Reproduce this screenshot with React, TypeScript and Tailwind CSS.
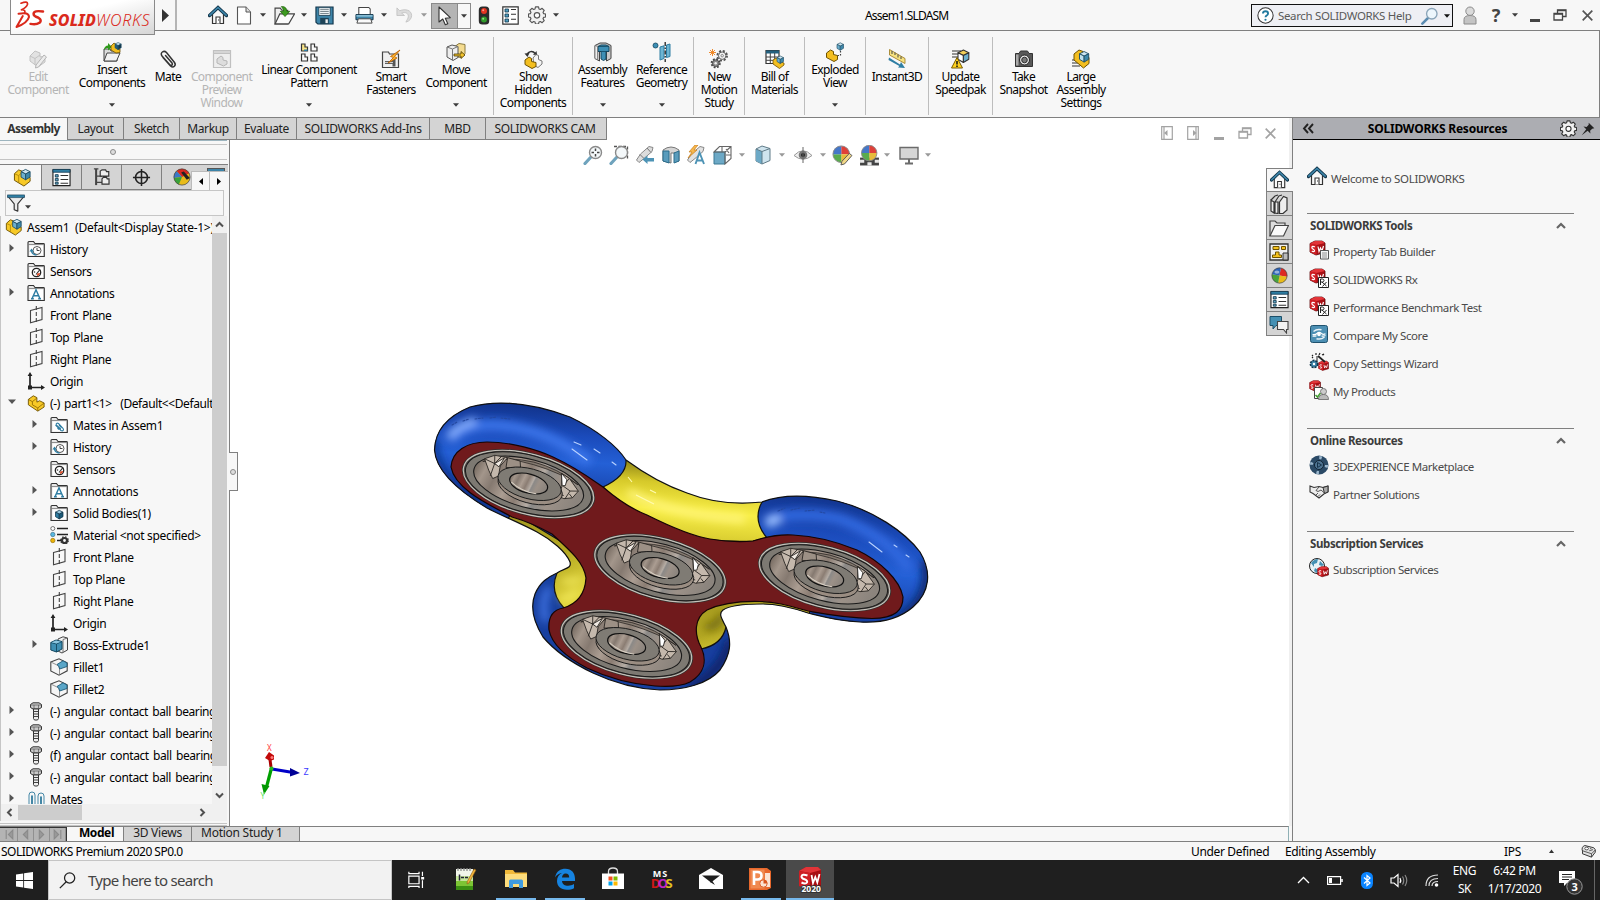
import React from "react";
import type { ReactNode } from "react";

type IconProps = { w?: number; h?: number; vb?: string; className?: string; children?: ReactNode };

function Svg({ w = 20, h = w, vb = "0 0 20 20", className = "", children }: IconProps) {
  return (
    <svg width={w} height={h} viewBox={vb} fill="none" className={`shrink-0 ${className}`}>
      {children}
    </svg>
  );
}

/* ---------- shared glyphs ---------- */

const Caret = ({ c = "#3c3c3c" }: { c?: string }) => (
  <Svg w={6} h={4} vb="0 0 6 4"><path d="M0 .3h6L3 3.7z" fill={c} /></Svg>
);

const Cube = ({ x = 0, y = 0, s = 1, top = "#cfe6f1", left = "#6cb0cf", right = "#3d88ab", line = "#1f4f66" }) => (
  <g transform={`translate(${x} ${y}) scale(${s})`} stroke={line} strokeWidth="1" strokeLinejoin="round">
    <path d="M0 2.500 5 0l5 2.500-5 2.500z" fill={top} />
    <path d="M0 2.500v6L5 11.500V5z" fill={left} />
    <path d="M10 2.500v6L5 11.500V5z" fill={right} />
  </g>
);

const AssemblyIcon = ({ w = 20 }: { w?: number }) => (
  <Svg w={w}>
    <path d="M1.500 6 6 2l4 1.500V9l3-1 5 2v4l-6.500 5L1.500 13z" fill="#f7c927" stroke="#6e5200" strokeLinejoin="round" />
    <path d="M1.500 6 6 8v7.500M6 8l4-4" stroke="#a57c00" strokeWidth=".8" />
    <Cube x={8.500} y={1.500} s={0.95} />
  </Svg>
);

const PartIcon = () => (
  <Svg w={18}>
    <path d="M1.500 6 7 2l4 2v5l3-1.500 5 2.500v4.500L12 19 1.500 12z" fill="#f7c927" stroke="#6e5200" strokeLinejoin="round" />
    <path d="M1.500 6 6 8.500l5-4M6 8.500V12l6 3.500 7-5.500M12 15.500V19" stroke="#8a6500" strokeWidth=".9" />
  </Svg>
);

const HomeIcon = ({ w = 20 }: { w?: number }) => (
  <Svg w={w}>
    <path d="M4.500 9.500V18.500h11V9.500" fill="#fafafa" stroke="#333" strokeWidth="1.200" />
    <path d="M8 18.500V12h4v6.500" fill="#fff" stroke="#333" strokeWidth="1.100" />
    <path d="M10.500 14.500v1" stroke="#333" />
    <path d="M1.500 10.500 10 2.500l8.500 8" stroke="#12354a" strokeWidth="3.400" strokeLinecap="round" />
    <path d="M1.800 10.200 10 2.500l8.200 7.700" stroke="#3d86ab" strokeWidth="1.600" strokeLinecap="round" />
  </Svg>
);

const FolderShell = ({ children }: { children?: ReactNode }) => (
  <Svg w={18} vb="0 0 18 18">
    <path d="M1 16.500V2.500q0-1 1-1h4.500l1.500 2h8.500q.8 0 .8.800V16.500z" fill="#e6e6e6" stroke="#333" strokeWidth="1.100" />
    <path d="M2.500 5.500h13.500v10H2.500z" fill="#fff" />
    <path d="M1 4.500h16" stroke="#777" strokeWidth=".8" />
    {children}
  </Svg>
);

const HistoryFolder = () => (
  <FolderShell>
    <circle cx="10" cy="10.500" r="4" fill="#fff" stroke="#555" strokeWidth="1" />
    <path d="M10 8v2.500h2.500" stroke="#333" strokeWidth=".9" />
    <path d="M4.500 10.500a5 5 0 0 0 5 4.500" stroke="#2f7ea3" strokeWidth="1.600" />
    <path d="M2.500 11.500 4.500 8.500l2.300 3z" fill="#2f7ea3" />
  </FolderShell>
);
const SensorFolder = () => (
  <FolderShell>
    <circle cx="9.500" cy="10.500" r="4.200" fill="#fff" stroke="#222" strokeWidth="1.300" />
    <path d="m9 12.500 4-5" stroke="#333" strokeWidth="1.200" />
    <path d="M10 14a3.600 3.600 0 0 0 3.200-3l-3 .5z" fill="#e2451f" />
    <circle cx="7.500" cy="10" r=".8" fill="#333" />
  </FolderShell>
);
const AnnotationFolder = () => (
  <FolderShell>
    <path d="m5 14.800 4-9 4 9M6.500 11.800h5M4 14.800h2.800m4.400 0H14" stroke="#2f7ea3" strokeWidth="1.500" />
  </FolderShell>
);
const MatesFolder = () => (
  <FolderShell>
    <path d="m5.500 9 5.500 5.500c2 1 3.200-.7 2-2.200L8.500 7.500C7 6.500 5.500 7.500 6.500 9.200l4.500 4M7.500 12l1.500 1.500M9 9l2.500 2.500" stroke="#2f7ea3" strokeWidth="1.100" />
  </FolderShell>
);
const BodyFolder = () => (
  <FolderShell>
    <Cube x={5.500} y={6.300} s={0.75} left="#2f7ea3" right="#1c5a78" top="#9ccbe0" line="#12354a" />
  </FolderShell>
);
const PlaneIcon = () => (
  <Svg w={18} vb="0 0 18 18">
    <path d="M3.500 4.500 15 1.500v12L3.500 16.800z" stroke="#444" strokeWidth="1.100" />
    <path d="M9.300 0v18" stroke="#444" strokeWidth="1.100" strokeDasharray="4 2" />
  </Svg>
);
const OriginIcon = () => (
  <Svg w={18} vb="0 0 18 18">
    <path d="M3 2v13.500h13" stroke="#222" strokeWidth="1.700" />
    <path d="M.6 4 3 0l2.400 4zM14 13l4 2.500-4 2.500z" fill="#222" />
    <rect x="1" y="13.500" width="4" height="4" fill="#222" />
  </Svg>
);
const MaterialIcon = () => (
  <Svg w={19} h={18} vb="0 0 19 18">
    <path d="M7 2.500h11M7 8.500h11M7 14.500h6" stroke="#222" strokeWidth="1.500" />
    <circle cx="2.800" cy="2.500" r="2" fill="#fff" stroke="#555" strokeWidth=".8" />
    <circle cx="2.800" cy="8.500" r="2.200" fill="#58b7e0" stroke="#35677d" strokeWidth=".6" />
    <circle cx="2.800" cy="14.500" r="2.200" fill="#eab308" stroke="#8a6500" strokeWidth=".6" />
    <circle cx="14.500" cy="14.500" r="2.500" fill="#f7f7f7" stroke="#333" strokeWidth="2.200" />
    <circle cx="14.500" cy="14.500" r="3.800" stroke="#333" strokeWidth="1.200" strokeDasharray="1.500 1.500" />
  </Svg>
);
const ExtrudeIcon = () => (
  <Svg w={18} vb="0 0 18 18">
    <path d="M8 3 13 .8 17.500 2v12L12 17 8 15z" fill="#f3f3f3" stroke="#444" />
    <path d="M13 3.500 17.500 2M13 3.500V16" stroke="#666" strokeWidth=".9" />
    <path d="M.8 6.500 6 4l6 1.500v7.500L6.500 16 .8 14z" fill="#3f8fb3" stroke="#12465f" />
    <path d="M.8 6.500 6.500 8 12 5.500M6.500 8v8" stroke="#12465f" strokeWidth=".9" />
    <path d="M1.500 6.400 6 4.500l5 1.200-4.500 1.800z" fill="#8cc5de" />
  </Svg>
);
const FilletIcon = () => (
  <Svg w={18} vb="0 0 18 18">
    <path d="M.8 4 9 .8l8.200 4v8L9 17.200.8 13z" fill="#f5f5f5" stroke="#444" strokeWidth="1.100" />
    <path d="M.8 4 8 7.500Q9.500 8.500 9.500 11V17" stroke="#777" strokeWidth=".8" />
    <path d="M7 6.500 13 2.800l4 2.200v3.500L9.700 11Q9.300 7.800 7 6.500z" fill="#5aa6c8" stroke="#1c5a78" strokeWidth=".9" />
  </Svg>
);
const BoltIcon = () => (
  <Svg w={14} h={19} vb="0 0 14 19">
    <path d="M1.500 2.500 4 .8h6l2.500 1.700v3L10 7H4L1.500 5.500z" fill="#c9c9c9" stroke="#333" />
    <path d="M1.500 3h11M5 3v4M9.500 3v4" stroke="#555" strokeWidth=".7" />
    <path d="M4.500 7h5v9.500L8.500 18h-3l-1-1.500z" fill="#eee" stroke="#333" />
    <path d="M4.500 9.500h5m-5 2.500h5m-5 2.500h5" stroke="#444" strokeWidth="1.100" />
  </Svg>
);
const MatesIcon = () => (
  <Svg w={17} h={16} vb="0 0 17 16">
    <path d="M1 16V4a3 3 0 0 1 6 0v12M3.500 16V5q.5-1.300 1 0v11M10 16V5a3 3 0 0 1 6 0v11M12.500 16V6q.5-1.300 1 0v10" stroke="#4487a6" strokeWidth="1" />
  </Svg>
);

const GearIcon = ({ w = 18, c = "#555" }: { w?: number; c?: string }) => (
  <Svg w={w}>
    <path
      d="M8.300 1h3.400l.5 2.300 1.500.6 2-1.300 2.300 2.400-1.300 2 .6 1.400 2.200.5v3.300l-2.200.5-.6 1.500 1.300 2-2.300 2.300-2-1.300-1.500.6-.5 2.200H8.300l-.5-2.200-1.500-.6-2 1.300L2 16.200l1.300-2-.6-1.500-2.200-.5V8.900l2.200-.5.6-1.400L2 5l2.300-2.400 2 1.300 1.500-.6z"
      fill="#f1f1f1"
      stroke={c}
      strokeWidth="1.300"
      strokeLinejoin="round"
    />
    <circle cx="10" cy="10.400" r="3" fill="#fff" stroke={c} strokeWidth="1.300" />
  </Svg>
);

const BallIcon = ({ w = 18 }: { w?: number }) => (
  <Svg w={w}>
    <g transform="rotate(10 10 10)">
      <path d="M10 10V1a9 9 0 0 1 9 9z" fill="#dd2a22" />
      <path d="M10 10h9a9 9 0 0 1-9 9z" fill="#e8bb1a" />
      <path d="M10 10v9a9 9 0 0 1-9-9z" fill="#49a33b" />
      <path d="M10 10H1a9 9 0 0 1 9-9z" fill="#2c63b8" />
    </g>
    <circle cx="10" cy="10" r="9" stroke="#444" strokeWidth=".8" />
    <ellipse cx="7" cy="6" rx="3" ry="2" fill="#fff" opacity=".5" />
  </Svg>
);

const ListIcon = ({ w = 18 }: { w?: number }) => (
  <Svg w={w}>
    <path d="M1 2h18v16.500H1z" fill="#fff" stroke="#222" strokeWidth="1.200" />
    <path d="M1 1.500h18v3H1z" fill="#2f7ea3" stroke="#12354a" strokeWidth=".8" />
    <path d="M3.500 7h3v2.500h-3zm0 4h3v2.500h-3zm0 4h3v2h-3z" fill="#5fa9c9" stroke="#12354a" strokeWidth=".9" />
    <path d="M9 8h8M9 12h8M9 16h8" stroke="#333" strokeWidth="1.100" />
  </Svg>
);

/* ---------- title bar ---------- */

const DocIcon = () => (
  <Svg w={16} h={19} vb="0 0 16 19">
    <path d="M1.500 1h8.500l4.500 5v12h-13z" fill="#fff" stroke="#555" strokeWidth="1.100" strokeLinejoin="round" />
    <path d="M10 1v5h4.500" fill="#ddd" stroke="#555" />
  </Svg>
);
const OpenIcon = () => (
  <Svg w={21}>
    <path d="M1 18V3h5l1.500 2H13v13z" fill="#eee" stroke="#444" strokeWidth="1.100" />
    <path d="M1 18 5.500 8.500h14L14 18z" fill="#fafafa" stroke="#444" strokeWidth="1.100" />
    <path d="M7 1.500c4 0 5 1.500 5 4.500h3l-4.500 5L6 6h3c0-2-.5-2.500-2-4.500z" fill="#3c9a1f" stroke="#1c6208" strokeWidth=".7" />
  </Svg>
);
const SaveIcon = () => (
  <Svg w={19}>
    <path d="M1 1h18v18H3l-2-2z" fill="#3d84a8" stroke="#12354a" strokeWidth="1.200" />
    <path d="M4 1.500h12V10H4z" fill="#eef3f5" stroke="#12354a" strokeWidth=".8" />
    <path d="M5.500 3.500h9m-9 2.200h9M5.500 8h9" stroke="#5a6a72" strokeWidth=".9" />
    <path d="M5.500 12.500h9V19h-9z" fill="#1e4357" />
    <path d="M11 14h2.500v4H11z" fill="#eee" />
  </Svg>
);
const PrintIcon = () => (
  <Svg w={19}>
    <path d="M4 9V1.500h10.500L16 3v6" fill="#fff" stroke="#444" strokeWidth="1.100" />
    <path d="M1 9h18v5.500H1z" fill="#3d84a8" stroke="#12354a" />
    <path d="M1.500 9.500h17v1.800h-17z" fill="#86bcd4" />
    <path d="M3.500 13.500h13L18 18H2z" fill="#fafafa" stroke="#444" />
  </Svg>
);
const UndoIcon = () => (
  <Svg w={19}>
    <path d="M2 2v8h8L7 7.500c4-1.500 7 0 7 3.500 0 2.500-2 4-2.500 6 4-1 6-4 6-7C17.500 4.500 11 2.500 5 5z" fill="#dcdcdc" stroke="#bdbdbd" strokeWidth=".8" />
  </Svg>
);
const PointerIcon = () => (
  <Svg w={15} h={20} vb="0 0 15 20">
    <path d="M2 1v15l3.800-3 2.500 5.800 2.500-1.100-2.500-5.500 5-.5z" fill="#fff" stroke="#333" strokeWidth="1.100" strokeLinejoin="round" />
  </Svg>
);
const LightIcon = () => (
  <Svg w={12} h={19} vb="0 0 12 19">
    <rect x=".8" y=".5" width="10.400" height="18" rx="3.500" fill="#2b2b2b" />
    <circle cx="6" cy="5" r="3" fill="#e33420" /><circle cx="5.200" cy="4.200" r="1" fill="#ff9b8c" />
    <circle cx="6" cy="13.500" r="3" fill="#2f9a2a" /><circle cx="5.200" cy="12.800" r="1" fill="#9ae08c" />
  </Svg>
);
const OptionsIcon = () => (
  <Svg w={17} h={19} vb="0 0 17 19">
    <path d="M.8.800h15.400v17.400H.8z" fill="#fff" stroke="#333" strokeWidth="1.200" />
    <path d="M3 3h3.500v3H3zm0 5h3.500v3H3zm0 5h3.500v3H3z" fill="#4d9dc0" stroke="#12354a" strokeWidth=".8" />
    <path d="M9 3.500h5m-5 4.800h5M9 13.300h5" stroke="#333" strokeWidth="1.100" />
  </Svg>
);

const MinGlyph = ({ c }: { c: string }) => <Svg w={10} h={14} vb="0 0 10 14"><path d="M0 11h10v3H0z" fill={c} /></Svg>;
const RestoreGlyph = ({ c }: { c: string }) => (
  <Svg w={14} h={12} vb="0 0 14 12">
    <path d="M4.500 4V1h8.500v6.500h-3.500" stroke={c} strokeWidth="1.300" />
    <path d="M4.500 1.500H13" stroke={c} strokeWidth="1.500" />
    <path d="M1 4.500h8.500v6.500H1z" stroke={c} strokeWidth="1.300" />
    <path d="M1 5h8.500" stroke={c} strokeWidth="1.500" />
  </Svg>
);
const CloseGlyph = ({ c }: { c: string }) => <Svg w={11} h={11} vb="0 0 11 11"><path d="m.7.700 9.600 9.600m0-9.600L.7 10.300" stroke={c} strokeWidth="1.700" /></Svg>;

function Cell({ c, children }: { c: string; children?: ReactNode }) {
  return <div className={`flex h-full shrink-0 items-center justify-center ${c}`}>{children}</div>;
}

function TitleBar() {
  return (
    <header className="flex h-[31px] shrink-0 border-b border-[#808080]">
      <div className="z-10 ml-[10px] flex h-[35px] w-[145px] shrink-0 items-start border border-t-0 border-[#8a8a8a] bg-linear-to-br from-white from-40% to-[#d6d6d6]">
        <Svg w={30} h={29} vb="0 0 30 29" className="ml-[4px] mt-[1px]">
          <g stroke="#da291c" strokeLinecap="round" strokeLinejoin="round">
            <path d="M6 2.200Q13 -.5 12.500 3.200Q11.500 6.500 6.500 8.800Q10.500 8.500 9.800 11.500" strokeWidth="1.700" />
            <path d="M3.500 12.700Q14 10.700 14 16Q12.500 22 1.500 26L7.800 15" strokeWidth="2" />
            <path d="M28 10.600Q18.800 9 18.600 12.800Q18.500 15.300 23.500 16.800Q27.300 19 24.500 21.800Q21 24.200 15.500 22.900" strokeWidth="2.500" />
          </g>
        </Svg>
        <div className="mt-[9px] ml-[4px] flex text-[16px] leading-[22px] text-[#da291c] italic">
          <span className="font-extrabold tracking-[0.2px]">SOLID</span>
          <span className="font-light tracking-[0.7px]">WORKS</span>
        </div>
      </div>
      <Cell c="w-[22px] border-r-2 border-[#b5b5b5]">
        <Svg w={7} h={13} vb="0 0 7 13"><path d="M0 0v13l7-6.500z" fill="#333" /></Svg>
      </Cell>
      <Cell c="ml-[27px] w-[28px]"><HomeIcon /></Cell>
      <Cell c="w-[24px]"><DocIcon /></Cell>
      <Cell c="w-[14px]"><Caret /></Cell>
      <Cell c="w-[28px]"><OpenIcon /></Cell>
      <Cell c="w-[12px]"><Caret /></Cell>
      <Cell c="w-[28px]"><SaveIcon /></Cell>
      <Cell c="w-[12px]"><Caret /></Cell>
      <Cell c="w-[28px]"><PrintIcon /></Cell>
      <Cell c="w-[12px]"><Caret /></Cell>
      <Cell c="w-[28px]"><UndoIcon /></Cell>
      <Cell c="w-[12px]"><Caret c="#999" /></Cell>
      <div className="mt-[3px] ml-px flex h-[26px] w-[40px] shrink-0 border border-[#8a8a8a]">
        <Cell c="w-[26px] border-r border-[#8a8a8a] bg-[#b4b4b4]"><PointerIcon /></Cell>
        <Cell c="w-[12px]"><Caret /></Cell>
      </div>
      <Cell c="w-[26px]"><LightIcon /></Cell>
      <Cell c="w-[26px]"><OptionsIcon /></Cell>
      <Cell c="w-[27px]"><GearIcon w={18} /></Cell>
      <Cell c="w-[12px]"><Caret /></Cell>
      <div className="ml-[303px] self-center pt-[2px] text-[12px] tracking-[-0.8px]">Assem1.SLDASM</div>
      <div className="ml-auto flex h-full w-[349px] shrink-0">
        <div className="mt-[4px] flex h-[23px] w-[202px] shrink-0 items-center border border-[#111] bg-[#eeeff4] pl-[5px]">
          <Svg w={17}>
            <circle cx="10" cy="10" r="9" fill="#fff" stroke="#333" strokeWidth="1.200" />
            <path d="M7 7.500q0-2.500 3-2.500t3 2.500q0 1.500-1.500 2.300Q10 10.500 10 12.200" stroke="#20799f" strokeWidth="2.200" />
            <circle cx="10" cy="15" r="1.300" fill="#20799f" />
          </Svg>
          <span className="ml-[4px] w-[141px] text-[11.500px] tracking-[-0.35px] whitespace-nowrap text-[#5a5a5a]">Search SOLIDWORKS Help</span>
          <Svg w={18} className="ml-[2px]">
            <path d="m1.500 18.500 6-6" stroke="#5b8bb0" strokeWidth="2.800" strokeLinecap="round" />
            <circle cx="12" cy="7.500" r="5.800" fill="#edf6fc" stroke="#8aa4b8" strokeWidth="1.500" />
          </Svg>
          <div className="ml-[5px]"><Caret c="#111" /></div>
        </div>
        <Cell c="w-[34px]">
          <Svg w={14} h={19} vb="0 0 14 19">
            <path d="M1 18v-4.500q0-4 6-4t6 4V18z" fill="#c4c4c4" stroke="#8a8a8a" />
            <circle cx="7" cy="5.200" r="4.200" fill="#dadada" stroke="#8a8a8a" />
          </Svg>
        </Cell>
        <Cell c="w-[18px] pt-px text-[18px] font-bold text-[#444]">?</Cell>
        <Cell c="w-[19px]"><Caret /></Cell>
        <Cell c="w-[21px]"><MinGlyph c="#444" /></Cell>
        <Cell c="w-[30px]"><RestoreGlyph c="#444" /></Cell>
        <Cell c="w-[24px]"><CloseGlyph c="#555" /></Cell>
      </div>
    </header>
  );
}

/* ---------- ribbon ---------- */

const DisabledPart = () => (
  <Svg>
    <path d="M2 7 7 2l5 2v4l5-1v6l-7 5-8-6z" fill="#e2e2e2" stroke="#c2c2c2" />
    <path d="M2 7l5 2.500L12 6M7 9.500V16" stroke="#c2c2c2" />
    <path d="m8 16 8-10 2.500 2-8 10-3 1z" fill="#ececec" stroke="#b5b5b5" />
  </Svg>
);
const InsertIcon = () => (
  <Svg>
    <path d="M2 19V7h6l1 2h6v10z" fill="#ddd" stroke="#444" />
    <path d="m2 19 3-8h13l-3.500 8z" fill="#f2f2f2" stroke="#444" />
    <path d="M2 8C2 5 4 3.500 6 3.500V1l4 4-4 3.500V6C4.500 6 3.500 6.500 2 8z" fill="#2e9a1a" />
    <path d="m9 4 3-3 2 1.500V6l4 1v3.500L14 11l-5-3z" fill="#f2bd1d" stroke="#6e5200" strokeWidth=".8" />
    <Cube x={13} y={.5} s={0.62} left="#23607e" right="#12354a" />
  </Svg>
);
const ClipIcon = () => (
  <Svg>
    <path d="M5 8.500 12.500 17c3 2.500 6-.5 4-3.500L8.500 3.500C6 1 1.500 3.500 4 7l8 9c2 1 3-.5 2-2L7.500 6.500" stroke="#333" strokeWidth="1.500" strokeLinecap="round" />
  </Svg>
);
const PreviewIcon = () => (
  <Svg>
    <path d="M1.500 1.500h17v17h-17z" fill="#eee" stroke="#c0c0c0" strokeWidth="1.200" />
    <path d="M1.500 1.500h17v3h-17z" fill="#d5d5d5" stroke="#c0c0c0" />
    <path d="m5 10 4-3 2 1.500V11l4 1v3l-3.500 2L5 14z" fill="#ddd" stroke="#b5b5b5" />
  </Svg>
);
const PatternIcon = () => (
  <Svg>
    <path d="M2.500 2h3.500v3h2.500v4h-6z" fill="#f8e58a" stroke="#333" strokeWidth="1.200" />
    <path d="M5 7.500h3.500V9H5z" fill="#2e7ea8" />
    <path d="M12 2h3.500v3H18v4h-6zM2.500 12H6v3h2.500v4h-6zM12 12h3.500v3H18v4h-6z" fill="#fafafa" stroke="#333" strokeWidth="1.200" />
  </Svg>
);
const SmartIcon = () => (
  <Svg>
    <path d="M1.500 18.500V3h6l1 2h9v13.500z" fill="#f0f0f0" stroke="#444" strokeWidth="1.200" />
    <path d="M4 13.500h8m1-4v8" stroke="#555" strokeWidth="3" />
    <path d="M4 13.500h8" stroke="#ccc" strokeWidth="1.200" />
    <path d="m19 1-9.500 6.500 3 1L7 14l9-5-2.500-1.500z" fill="#ffb62e" stroke="#b65c00" strokeWidth=".8" />
  </Svg>
);
const MoveIcon = () => (
  <Svg>
    <path d="m8 5 5-3.500 6 1v9l-4 4-7-1z" fill="#f5dc90" stroke="#8a7a40" />
    <path d="M1 5 6 3l6 1.500v11L7 18.500 1 15z" fill="#eee" stroke="#555" />
    <path d="m1 5 5.500 2L12 4.500M6.500 7v11" stroke="#777" />
    <path d="M8 12h7V9.500l4 3.500-4 3.500V14H8z" fill="#f2c32b" stroke="#4a3900" strokeWidth=".8" />
  </Svg>
);
const HiddenIcon = () => (
  <Svg>
    <path d="m10 9 3-3.500 2.500 1v4l3.500 1.500v3l-4 3.500-4-2z" fill="#f4f4f4" stroke="#777" />
    <path d="m2 11 4-3 2.500 1.500v3l4.500 1v4L9 19.500l-7-4z" fill="#f3be1f" stroke="#6e5200" />
    <path d="M4 6c1-4 6-4.500 8-1.500" stroke="#333" strokeWidth="1.500" /><path d="m1.500 4.500 5-.5-2 4zM10 6l4-.5-.5-3.500z" fill="#333" />
  </Svg>
);
const FeaturesIcon = () => (
  <Svg>
    <path d="M2 3.500 7 1h6l5 2.500v13L13.500 19V8.500h-7V19L2 16.500z" fill="#c9c9c9" stroke="#444" />
    <path d="M5 4.500 8 3h5l3 1.500v5h-3V17l-2.500 1.500L8 17V9.500H5z" fill="#3d8fb5" stroke="#12465f" />
    <path d="M5 4.500h7l4-.2M8 9.500h5" stroke="#12465f" strokeWidth=".8" />
    <path d="M2 3.500v13l2.500 1.300V4.500z" fill="#efefef" stroke="#666" strokeWidth=".7" />
  </Svg>
);
const GeometryIcon = () => (
  <Svg>
    <circle cx="3.500" cy="3.500" r="2.500" fill="#3d8fb5" stroke="#12465f" strokeWidth=".8" />
    <path d="m8 5 4-1.200v12.700L8 18zM14.500 3 18 2v12.500l-3.500 1z" fill="#6db5d3" stroke="#2f7ea3" />
    <path d="M13.200 0v20" stroke="#222" strokeWidth="1.300" strokeDasharray="4 1.500 1.500 1.500" />
  </Svg>
);
const MotionIcon = () => (
  <Svg>
    <g transform="translate(7 .5) scale(.62)"><circle cx="10" cy="10" r="7.800" stroke="#555" strokeWidth="3" strokeDasharray="3.400 2.720" /><circle cx="10" cy="10" r="6" fill="#f1f1f1" stroke="#555" strokeWidth="1.500" /><circle cx="10" cy="10" r="2" stroke="#555" /></g>
    <g transform="translate(1.500 9) scale(.52)"><circle cx="10" cy="10" r="7.800" stroke="#444" strokeWidth="4" strokeDasharray="3.400 2.720" /><circle cx="10" cy="10" r="6.500" fill="#8a8a8a" stroke="#444" strokeWidth="1.500" /><circle cx="10" cy="10" r="2.400" fill="#eee" /></g>
    <path d="M3.500 0v7M0 3.500h7M1 1l5 5m0-5L1 6" stroke="#ef8a2b" strokeWidth="1" />
  </Svg>
);
const BomIcon = () => (
  <Svg>
    <path d="M1 1.500h13v13H1z" fill="#fff" stroke="#333" strokeWidth="1.200" />
    <path d="M1 1.500h13v3H1z" fill="#23607e" />
    <path d="M1 8h13M1 11.300h13M5.300 4v10M9.700 4v10" stroke="#444" />
    <path d="m8 11 3-2 2 1v2l6 2v2l-4.500 3.500L8 15z" fill="#f3be1f" stroke="#6e5200" strokeWidth=".8" />
    <Cube x={12} y={7} s={0.65} />
  </Svg>
);
const ExplodeIcon = () => (
  <Svg>
    <path d="m1.500 11 4-3 3 1.500v3l4 1v4L9 19.500l-7.500-4z" fill="#f3be1f" stroke="#6e5200" />
    <Cube x={12} y={.8} s={0.65} />
    <path d="M15.500 9v4.500h-3" stroke="#444" strokeWidth="1.200" strokeDasharray="1.500 1.500" />
  </Svg>
);
const InstantIcon = () => (
  <Svg>
    <path d="m2.500.5 15.500 9v5L2.500 6z" fill="#f6e27f" stroke="#a3832c" strokeWidth=".9" />
    <path d="M5 2v3m3-1.500v2.500M11 5.500v3m3-1v2.500" stroke="#444" strokeWidth="1" />
    <path d="m2 8.500 11 7 1-2.500 4 6-7-.5 1.300-1.500L1.500 11z" fill="#2f7ea3" />
  </Svg>
);
const SpeedIcon = () => (
  <Svg>
    <path d="M1 2h9M1 5h7M1 8h6" stroke="#333" strokeWidth="1.200" />
    <Cube x={7} y={1} s={1.080} left="#fff" right="#6cb0cf" top="#f3cf58" line="#333" />
    <path d="m6 8.500 5.500 10.500H.5z" fill="#ffd21e" stroke="#7a5c00" />
    <path d="M6 12v3.500m0 1v1.500" stroke="#111" strokeWidth="1.500" />
  </Svg>
);
const CameraIcon = () => (
  <Svg>
    <path d="M1.500 4.500H5l1.500-2.500h7L15 4.500h3.500v13h-17z" fill="#585858" stroke="#333" />
    <path d="M2 5.500h2.500v11H2z" fill="#aaa" />
    <circle cx="10.500" cy="11" r="5" fill="#e3e3e3" stroke="#222" /><circle cx="10.500" cy="11" r="2.800" fill="#777" stroke="#222" strokeWidth=".9" />
  </Svg>
);
const LargeIcon = () => (
  <Svg>
    <path d="M1 11h6m-6 3h7m-7 3h8" stroke="#333" strokeWidth="1.100" />
    <path d="M3 5 8 1l4 1.500V7l6 1.500v6L12.500 19 3 11z" fill="#f3be1f" stroke="#6e5200" />
    <Cube x={8.500} y={2.500} s={0.92} left="#bfe0ee" />
  </Svg>
);

type Tool = { w: string; icon: ReactNode; lines: string[]; caret?: boolean; up?: boolean; dim?: boolean; sep?: boolean };
const TOOLS: Tool[] = [
  { w: "w-[76px]", icon: <DisabledPart />, lines: ["Edit", "Component"], dim: true },
  { w: "w-[72px]", icon: <InsertIcon />, lines: ["Insert", "Components"], up: true, caret: true },
  { w: "w-[40px]", icon: <ClipIcon />, lines: ["Mate"] },
  { w: "w-[67px]", icon: <PreviewIcon />, lines: ["Component", "Preview", "Window"], dim: true },
  { w: "w-[108px]", icon: <PatternIcon />, lines: ["Linear Component", "Pattern"], up: true, caret: true },
  { w: "w-[56px]", icon: <SmartIcon />, lines: ["Smart", "Fasteners"] },
  { w: "w-[75px]", icon: <MoveIcon />, lines: ["Move", "Component"], up: true, caret: true, sep: true },
  { w: "w-[79px]", icon: <HiddenIcon />, lines: ["Show", "Hidden", "Components"], sep: true },
  { w: "w-[59px]", icon: <FeaturesIcon />, lines: ["Assembly", "Features"], up: true, caret: true },
  { w: "w-[62px] pr-[2px]", icon: <GeometryIcon />, lines: ["Reference", "Geometry"], up: true, caret: true, sep: true },
  { w: "w-[51px]", icon: <MotionIcon />, lines: ["New", "Motion", "Study"], sep: true },
  { w: "w-[60px]", icon: <BomIcon />, lines: ["Bill of", "Materials"], sep: true },
  { w: "w-[61px]", icon: <ExplodeIcon />, lines: ["Exploded", "View"], up: true, caret: true, sep: true },
  { w: "w-[63px]", icon: <InstantIcon />, lines: ["Instant3D"], sep: true },
  { w: "w-[64px]", icon: <SpeedIcon />, lines: ["Update", "Speedpak"], sep: true },
  { w: "w-[61px]", icon: <CameraIcon />, lines: ["Take", "Snapshot"] },
  { w: "w-[54px]", icon: <LargeIcon />, lines: ["Large", "Assembly", "Settings"] },
];

function Ribbon() {
  return (
    <div className="flex h-[87px] shrink-0 border-r border-b border-[#808080] pt-[6px]">
      {TOOLS.map((t) => (
        <div
          key={t.lines.join(" ")}
          className={`flex h-[78px] shrink-0 flex-col items-center ${t.w} ${t.sep ? "border-r border-[#bdbdbd]" : ""} ${t.up ? "pt-[5px]" : "pt-[12px]"} ${t.dim ? "text-[#b5b5b5]" : "text-black"}`}
        >
          {t.icon}
          <div className="mt-px text-center text-[12px] leading-[13px] tracking-[-0.6px] whitespace-nowrap">
            {t.lines.map((l) => <div key={l}>{l}</div>)}
          </div>
          {t.caret && <div className="mt-[14px] flex"><Caret /></div>}
        </div>
      ))}
    </div>
  );
}

const TABS = [
  ["Layout", "w-[56px]"], ["Sketch", "w-[56px]"], ["Markup", "w-[57px]"], ["Evaluate", "w-[60px]"],
  ["SOLIDWORKS Add-Ins", "w-[133px]"], ["MBD", "w-[56px]"], ["SOLIDWORKS CAM", "w-[121px] pr-[2px]"],
];

function CommandTabs() {
  return (
    <div className="flex h-[22px] shrink-0 bg-white text-[12px] leading-[21px] whitespace-nowrap">
      <div className="w-[68px] border-r border-[#808080] bg-[#f7f7f7] text-center font-bold tracking-[-0.6px] text-[#333]">Assembly</div>
      {TABS.map(([t, w]) => (
        <div key={t} className={`border-r border-b border-[#808080] bg-[#d4d4d4] text-center tracking-[-0.35px] text-[#222] ${w}`}>{t}</div>
      ))}
    </div>
  );
}

/* ---------- feature tree ---------- */

type Row = { d: number; a?: "r" | "d"; icon: ReactNode; t: string };
const ROWS: Row[] = [
  { d: 1, a: "r", icon: <HistoryFolder />, t: "History" },
  { d: 1, icon: <SensorFolder />, t: "Sensors" },
  { d: 1, a: "r", icon: <AnnotationFolder />, t: "Annotations" },
  { d: 1, icon: <PlaneIcon />, t: "Front Plane" },
  { d: 1, icon: <PlaneIcon />, t: "Top Plane" },
  { d: 1, icon: <PlaneIcon />, t: "Right Plane" },
  { d: 1, icon: <OriginIcon />, t: "Origin" },
  { d: 1, a: "d", icon: <PartIcon />, t: "(-) part1<1>  (Default<<Default>" },
  { d: 2, a: "r", icon: <MatesFolder />, t: "Mates in Assem1" },
  { d: 2, a: "r", icon: <HistoryFolder />, t: "History" },
  { d: 2, icon: <SensorFolder />, t: "Sensors" },
  { d: 2, a: "r", icon: <AnnotationFolder />, t: "Annotations" },
  { d: 2, a: "r", icon: <BodyFolder />, t: "Solid Bodies(1)" },
  { d: 2, icon: <MaterialIcon />, t: "Material <not specified>" },
  { d: 2, icon: <PlaneIcon />, t: "Front Plane" },
  { d: 2, icon: <PlaneIcon />, t: "Top Plane" },
  { d: 2, icon: <PlaneIcon />, t: "Right Plane" },
  { d: 2, icon: <OriginIcon />, t: "Origin" },
  { d: 2, a: "r", icon: <ExtrudeIcon />, t: "Boss-Extrude1" },
  { d: 2, icon: <FilletIcon />, t: "Fillet1" },
  { d: 2, icon: <FilletIcon />, t: "Fillet2" },
  { d: 1, a: "r", icon: <BoltIcon />, t: "(-) angular contact ball bearing" },
  { d: 1, a: "r", icon: <BoltIcon />, t: "(-) angular contact ball bearing" },
  { d: 1, a: "r", icon: <BoltIcon />, t: "(f) angular contact ball bearing" },
  { d: 1, a: "r", icon: <BoltIcon />, t: "(-) angular contact ball bearing" },
  { d: 1, a: "r", icon: <MatesIcon />, t: "Mates" },
];

const ScrollChevron = ({ d }: { d: string }) => (
  <Svg w={9} h={9} vb="0 0 9 9"><path d={d} stroke="#505050" strokeWidth="2" /></Svg>
);

function FeaturePanel() {
  return (
    <aside className="flex w-[230px] shrink-0 flex-col border-r border-[#808080]">
      <div className="mr-[2px] h-[5px] shrink-0 border-t border-b border-t-[#9db5bf] border-b-[#c4c4c4]" />
      <div className="mr-[2px] flex h-[15px] shrink-0 items-center justify-center border-b border-[#c4c4c4]">
        <div className="mr-[2px] size-[6px] rounded-full border border-[#8a8a8a] bg-[#ddd]" />
      </div>
      <div className="mt-[4px] mr-[2px] flex h-[26px] shrink-0">
        <div className="flex w-[42px] shrink-0 items-center justify-center border-t border-r border-[#808080] pl-[3px]"><AssemblyIcon w={19} /></div>
        <div className="flex w-[40px] shrink-0 items-center justify-center border-t border-r border-b border-[#808080] bg-[#d4d4d4]"><ListIcon w={19} /></div>
        <div className="flex w-[40px] shrink-0 items-center justify-center border-t border-r border-b border-[#808080] bg-[#d4d4d4]">
          <Svg w={18}>
            <path d="M3.500 1v18M1 1h5M3.500 9H10M3.500 16H10" stroke="#444" strokeWidth="1.300" />
            <path d="M3.500 1v18" stroke="#444" strokeWidth="2.200" />
            <path d="M8 3.500 10 2h4l1 2h2.500v5H8zM10 12l1.500-1.500h3.500l.8 1.500h2v6H10z" fill="#eee" stroke="#333" strokeWidth="1.300" />
          </Svg>
        </div>
        <div className="flex w-[40px] shrink-0 items-center justify-center border-t border-r border-b border-[#808080] bg-[#d4d4d4]">
          <Svg w={19}><circle cx="10" cy="10" r="6.300" stroke="#222" strokeWidth="1.700" /><path d="M10 1v18M1 10h18" stroke="#222" strokeWidth="1.600" /></Svg>
        </div>
        <div className="flex w-[29px] shrink-0 items-center justify-end overflow-hidden border-t border-b border-[#808080] bg-[#d4d4d4]">
          <Svg w={18}>
            <circle cx="10" cy="10" r="9" fill="#e8bb1a" />
            <path d="M10 10 4 3.200A9 9 0 0 1 18 5.800z" fill="#d8281f" />
            <path d="M10 10 4 3.200A9 9 0 0 0 1 11z" fill="#3a77c8" />
            <path d="M10 10 1 11q1 5.500 5.500 7.300z" fill="#39a23a" />
            <path d="m9 5 3-1 6.800 7-3.500 2z" fill="#222" />
            <circle cx="10" cy="10" r="9" stroke="#444" strokeWidth=".8" />
          </Svg>
        </div>
        <div className="flex w-[37px] shrink-0 flex-col">
          <div className="flex h-[7px] justify-center border-t border-[#808080] bg-[#d4d4d4] pt-[3px] pl-[12px]"><div className="h-[4px] w-[18px] border border-[#555] bg-[#3d84a8]" /></div>
          <div className="flex h-[19px] border-t border-l border-[#bbb]">
            <Cell c="w-[18px] border-r border-[#bbb]"><Svg w={4} h={7} vb="0 0 4 7"><path d="M4 0v7L0 3.500z" fill="#000" /></Svg></Cell>
            <Cell c="w-[18px]"><Svg w={4} h={7} vb="0 0 4 7"><path d="M0 0v7l4-3.500z" fill="#000" /></Svg></Cell>
          </div>
        </div>
      </div>
      <div className="ml-[5px] flex h-[26px] w-[219px] shrink-0 items-center gap-0 border border-[#c6c6c6] pl-[1px]">
        <Svg w={18}>
          <path d="M1 2.500 8 11v6.500l4 1.500v-8l7-8.500z" fill="#ececec" stroke="#333" strokeWidth="1.300" strokeLinejoin="round" />
          <path d="M.5 1h19v3H.5z" fill="#2f7ea3" stroke="#12354a" strokeWidth=".6" />
        </Svg>
        <div className="pt-[7px]"><Caret /></div>
      </div>
      <div className="flex h-[588px] shrink-0">
        <div className="w-[212px] shrink-0 overflow-hidden border-l border-[#c6c6c6] text-[12px] whitespace-pre">
          <div className="flex h-[22px] items-center pl-[4px]"><AssemblyIcon w={18} /><span className="pt-[2px] pl-[4px] tracking-[-0.27px]">{"Assem1  (Default<Display State-1>)"}</span></div>
          {ROWS.map((r, i) => (
            <div key={i} className={`flex h-[22px] items-center ${r.d === 2 ? "pl-[31px] tracking-[-0.33px]" : "pl-[8px] tracking-[-0.4px] [word-spacing:1.5px]"}`}>
              <div className="w-[18px] shrink-0 pb-[3px]">
                {r.a === "r" && <Svg w={5} h={8} vb="0 0 5 8"><path d="M.5 0v8L5 4z" fill="#555" /></Svg>}
                {r.a === "d" && <Svg w={8} h={5} vb="0 0 8 5" className="-ml-px"><path d="M0 .5h8L4 5z" fill="#555" /></Svg>}
              </div>
              <div className="flex w-[18px] shrink-0 justify-center">{r.icon}</div>
              <span className="pt-[2px] pl-[5px]">{r.t}</span>
            </div>
          ))}
        </div>
        <div className="flex w-[15px] flex-col items-center bg-[#f0f0f0]">
          <div className="flex h-[17px] items-center"><ScrollChevron d="M1 6.500 4.500 3 8 6.500" /></div>
          <div className="h-[533px] w-full bg-[#cdcdcd]" />
          <div className="mt-auto flex h-[17px] items-center"><ScrollChevron d="M1 2.500 4.500 6 8 2.500" /></div>
        </div>
      </div>
      <div className="mr-[2px] flex h-[17px] shrink-0 items-center border-l border-[#c6c6c6] bg-[#f0f0f0]">
        <div className="flex w-[17px] justify-center"><ScrollChevron d="M6.500 1 3 4.500 6.500 8" /></div>
        <div className="h-[15px] w-[64px] bg-[#cdcdcd]" />
        <div className="mr-[20px] ml-auto"><ScrollChevron d="M2.500 1 6 4.500 2.500 8" /></div>
      </div>
      <div className="mt-[2px] mr-[2px] h-[3px] shrink-0 border-t border-b border-[#c4c4c4]" />
    </aside>
  );
}

/* ---------- model ---------- */

const BODY =
  "M434.500 450C435 430 448 416 470 407C503 398 540 406 570 417C597 430 617 446 626 460C645 474 664 485 687 493C710 502 735 505 762 502C780 495 805 494 837 501C873 510 905 532 920 552C932 572 930 592 913 607C898 620 878 623 860 622C838 621 824 617 808 613C793 608 778 604 763 604C745 604 730 605 723 610C718 614 722 619 726 627C732 642 731 654 720 670C708 684 684 690 660 690C636 689 612 682 593 673C570 662 553 649 543 637C533 621 530 607 535 594C540 582 548 577 557 573C564 568 572 569 570 562C566 552 552 540 537 532C520 523 498 514 487 508C462 493 436 473 434.500 450Z";
const FACE =
  "M451 467C452 451 467 442 487 442C512 442 538 450 553 457C575 467 590 478 603 487C618 500 634 510 647 515C667 525 692 536 710 539C728 542 743 542 753 541C765 537 778 534 793 535C815 536 840 543 857 550C880 561 900 580 903 597C903 610 896 618 872 618.500C845 618 825 614 808 611C790 606 775 601.500 760 601.500C742 601 722 603 707 610C694 618 694 634 701 647C707 660 705 673 690 682C680 687 668 687 655 686C630 684 606 677 587 668C568 658 552 645 549 630C548 618 552 610 563 608C577 604 585 594 586 578C584 563 572 552 552 534C534 524 524 520.500 512 517C492 506 455 490 451 467Z";

const Bearing = ({ x, y }: { x: number; y: number }) => (
  <g transform={`translate(${x} ${y}) rotate(15)`}>
    <ellipse rx="68.500" ry="31.200" fill="#33302d" />
    <ellipse rx="67" ry="29.900" stroke="#c6c2bb" strokeWidth="1.200" fill="#4b4844" />
    <ellipse rx="64.800" ry="28.500" fill="#7d7972" stroke="#1a1a1a" strokeWidth="1" />
    <ellipse cx="0" cy="-.5" rx="56.500" ry="24" fill="url(#metal)" stroke="#1a1a1a" strokeWidth="1.100" />
    <path d="M-50 -10Q0 -34 48 -12Q30 -19 0 -20Q-30 -21 -50 -10Z" fill="#857a70" stroke="#26221f" strokeWidth=".7" />
    <g stroke="#26221f" strokeWidth=".8" strokeLinejoin="round">
      <path d="M-49-13-40-19-27-20-32-10-31 0-36 4-42-3Z" fill="#c4b8ac" />
      <path d="m-40-19 2 8-11-2m16-7-5 9-1 13m7-12-7-1" />
      <path d="M-38-11-30-19-33-9Z" fill="#efe9e2" />
      <path d="M-27-20-14-20-12-14-26-10Z" fill="#9c9085" />
      <path d="M29-19 38-16 50-6 46 2 38 5 31 4 33-6Z" fill="#c4b8ac" />
      <path d="m38-16-4 9 8 3 8-2m-8 2-3 9m-6-3 4 0m5-3 4 3" />
      <path d="M29-19 36-14 36-8 33-7Z" fill="#fff" />
    </g>
    <ellipse cx="2.500" cy="3" rx="33" ry="15.500" fill="#9a8d82" stroke="#1a1a1a" strokeWidth=".9" />
    <ellipse cx="1" cy="-.5" rx="32.500" ry="15" fill="#7f7b74" stroke="#1a1a1a" strokeWidth=".9" />
    <ellipse cx="0" cy="-.5" rx="19.500" ry="9.500" fill="url(#metal)" stroke="#111" strokeWidth="1.200" />
    <path d="M-17 2.500Q-5 9 10 7.500" stroke="#d8d0c4" strokeWidth="1" />
  </g>
);

function Spinner() {
  return (
    <svg width="520" height="310" viewBox="420 390 520 310" fill="none" className="absolute top-[250px] left-[190px]">
      <defs>
        <clipPath id="bodyClip"><path d={BODY} /></clipPath>
        <linearGradient id="blueTop" x1="0" y1="0" x2="-.15" y2="1">
          <stop offset="0" stopColor="#12358f" /><stop offset=".25" stopColor="#1b4bbb" /><stop offset=".5" stopColor="#2460d6" /><stop offset=".8" stopColor="#1845ad" /><stop offset="1" stopColor="#102f80" />
        </linearGradient>
        <linearGradient id="yellowTop" x1=".15" y1="0" x2="0" y2="1">
          <stop offset="0" stopColor="#7d7410" /><stop offset=".28" stopColor="#d6c92a" /><stop offset=".58" stopColor="#f8ee45" /><stop offset="1" stopColor="#cfc22a" />
        </linearGradient>
        <linearGradient id="yellowLow" x1="0" y1="0" x2=".6" y2="1">
          <stop offset="0" stopColor="#a39820" /><stop offset=".6" stopColor="#b3a722" /><stop offset="1" stopColor="#e0d43a" />
        </linearGradient>
        <linearGradient id="metal" x1="0" y1="0" x2="1" y2=".1">
          <stop offset="0" stopColor="#62574e" /><stop offset=".14" stopColor="#a3968b" /><stop offset=".25" stopColor="#857970" /><stop offset=".38" stopColor="#ab9d92" /><stop offset=".5" stopColor="#8b7d73" /><stop offset=".62" stopColor="#b5aca4" /><stop offset=".66" stopColor="#8b8987" /><stop offset=".78" stopColor="#9c9188" /><stop offset="1" stopColor="#8b847d" />
        </linearGradient>
        <filter id="soft" filterUnits="userSpaceOnUse" x="420" y="390" width="520" height="310"><feGaussianBlur stdDeviation="4" /></filter>
      </defs>
      <g clipPath="url(#bodyClip)">
        <path d="M420 390H940V700H420Z" fill="#173f9f" />
        <path d="M430 400H640V500H430Z" fill="url(#blueTop)" />
        <path d="M750 490H940V625H750Z" fill="url(#blueTop)" />
        <g filter="url(#soft)">
          <path d="M450 440Q462 424 495 425Q545 428 590 462" stroke="#3b74ea" strokeWidth="11" />
          <path d="M449 438Q456 426 476 421" stroke="#86aefc" strokeWidth="8" />
          <path d="M766 520Q800 510 840 519Q890 538 910 570" stroke="#3069e0" strokeWidth="11" />
          <path d="M766 524L780 518" stroke="#9abfff" strokeWidth="10" />
          <path d="M434 440Q434 480 490 512" stroke="#0e2c7d" strokeWidth="6" />
          <path d="M550 588Q540 600 546 622" stroke="#3d6fdf" strokeWidth="8" />
          <path d="M730 640Q725 670 690 688" stroke="#0b2367" strokeWidth="10" />
          <path d="M925 560Q934 600 895 622" stroke="#0c2568" strokeWidth="9" />
        </g>
        <path d="M626 460Q627 476 603 487Q650 545 753 541L767 538Q752 520 762 502L760 490L640 455Z" fill="url(#yellowTop)" stroke="#111" strokeWidth="1.200" />
        <path d="M628 492Q670 515 745 519" stroke="#fff57a" strokeWidth="8" filter="url(#soft)" />
        <path d="M512 512L505 524L548 562L557 573Q549 592 564 608L592 605L592 560Z" fill="url(#yellowLow)" stroke="#111" strokeWidth="1.200" />
        <path d="M562 580Q572 584 580 578M560 598Q570 600 577 590" stroke="#f5ec62" strokeWidth="5" filter="url(#soft)" />
        <path d="M812 600L808 620L760 615L730 613L726 627Q722 645 701 649L688 640L700 596Z" fill="url(#yellowLow)" stroke="#111" strokeWidth="1.200" />
        <path d="M722 614Q718 628 705 627" stroke="#6f670f" strokeWidth="7" filter="url(#soft)" />
        <g stroke="#b9d2ff" strokeWidth="1.100" strokeLinecap="round">
          <path d="m574 442 7 3m-9 4 15 11m7-11 6 4m12 9 4 3M894 545l3 2m-28-5 13 10m24 3 3 2" />
          <path d="m452 425 5-3m6-1 6-2m6 0 8-1m7 0 6-1m5 1 9 1M778 511l7-3m6 2 9-2m5 3 10-1m5 2 5 1" stroke="#2348a0" strokeDasharray="2 1.500" />
        </g>
        <path d="m628 477 4 5m4 13 18 9m-4-14 6 3" stroke="#fffbb0" strokeWidth="1.100" />
      </g>
      <path d={FACE} fill="#701a1c" stroke="#140404" strokeWidth="1.200" />
      <path d={BODY} stroke="#111" strokeWidth="1.200" />
      <Bearing x={528.500} y={484} />
      <Bearing x={660} y={568.500} />
      <Bearing x={626.500} y={644.500} />
      <Bearing x={824.500} y={577} />
    </svg>
  );
}

function Triad() {
  return (
    <svg width="60" height="60" viewBox="255 740 60 60" className="absolute top-[600px] left-[25px]">
      <path d="M271 767 269.500 756" stroke="#a80000" strokeWidth="3" />
      <path d="m265 758 4-6 5 3.500v4l-4 1.500z" fill="#c20a0a" /><circle cx="272" cy="757.500" r="1.500" fill="#ff7a7a" />
      <path d="m272 769 21 3.500" stroke="#0000c8" strokeWidth="3" /><path d="m290 768 10 5-10 3.500z" fill="#000096" />
      <path d="m271.500 768-5 19" stroke="#00a000" strokeWidth="3.200" /><path d="m261.500 784 8 2-5.500 8.500z" fill="#009600" />
      <circle cx="271.500" cy="768.500" r="2" fill="#1ebb1e" />
      <text x="267" y="751" fontSize="8" fill="#ff3c3c">X</text>
      <text x="303.500" y="775" fontSize="9" fill="#3c3cff">Z</text>
      <text x="260.500" y="798.500" fontSize="8" fill="#64e664">Y</text>
    </svg>
  );
}

/* heads-up view toolbar */
const Lens = () => (
  <>
    <path d="m2 18.500 5.500-6" stroke="#6fa3bd" strokeWidth="3.200" strokeLinecap="round" />
    <circle cx="12.500" cy="7.500" r="6" fill="#f4f8fa" stroke="#8a8a8a" strokeWidth="1.400" />
  </>
);
const SmallBall = () => (
  <>
    <path d="M10 10V1a9 9 0 0 1 9 9z" fill="#e04038" />
    <path d="M10 10h9a9 9 0 0 1-9 9z" fill="#e8bb3a" />
    <path d="M10 10v9a9 9 0 0 1-9-9z" fill="#59ab4d" />
    <path d="M10 10H1a9 9 0 0 1 9-9z" fill="#4577c8" />
    <circle cx="10" cy="10" r="9" stroke="#888" />
  </>
);
const HUD: { w: string; n: ReactNode }[] = [
  { w: "w-[26px]", n: <Svg><Lens /><path d="M12.500 3.500v8m-4-4h8" stroke="#444" strokeWidth="1.500" strokeDasharray="2.500 3" /></Svg> },
  { w: "w-[26px]", n: <Svg><path d="M5 1.500h13.500v12" stroke="#555" strokeWidth="1.300" strokeDasharray="3 1.500" /><Lens /></Svg> },
  { w: "w-[26px]", n: <Svg><path d="m1.500 15 4-6L14 1.500l4 1-1 4-8 7-5 4z" fill="#dcdcdc" stroke="#888" /><path d="m12 3 4 4.500M5 9.500l4 4" stroke="#777" /><path d="m7.500 14.500 5-4v2.500h6.500v3.500h-6.500V19z" fill="#4d93b5" /></Svg> },
  { w: "w-[25px]", n: <Svg><path d="M2 5q8-6 16 0v11l-4 1V8h-4v10l-8-2z" fill="#d5d5d5" stroke="#777" /><path d="M2 6h6v12l-6-2zM13 8l5-2v10l-5 2z" fill="#5a9cbc" stroke="#2b6d8c" /></Svg> },
  { w: "w-[26px]", n: <Svg><path d="m1.500 15 4-6L14 1.500l4 1-1 4-8 7-5 4z" fill="#e2e2e2" stroke="#888" /><path d="M9 0 3 7h3l-4 6 9-8H8l4-5z" fill="#f7b84d" stroke="#c77d1c" strokeWidth=".7" /><path d="m9.500 19 4-11.500L18 19M10.500 15.500h6" stroke="#4d93b5" strokeWidth="1.900" /></Svg> },
  { w: "w-[27px]", n: <Svg><path d="M1 7h11v12H1z" fill="#6da9c6" stroke="#3b7894" /><path d="M1 7 6.500 1.500H18v12L12 19V7zm11 0 6-5.500M9 1.500V7m4-3 3 4m-3 2h5" stroke="#666" strokeWidth="1.100" /></Svg> },
  { w: "w-[12px]", n: <Caret c="#999" /> },
  { w: "w-[29px]", n: <Svg><path d="M3 4 9 1l8 2.500v12L9 19l-6-3z" fill="#cfe4ee" stroke="#5f7a87" /><path d="m3 4 6 2.500V19l-6-3z" fill="#6da9c6" /><path d="m3 4 6 2.500 8-3M9 6.500V19" stroke="#5f7a87" /></Svg> },
  { w: "w-[10px]", n: <Caret c="#999" /> },
  { w: "w-[31px]", n: <Svg><path d="M1 10.500Q10 1 19 10.500 10 18 1 10.500z" fill="#eee" stroke="#999" /><circle cx="10" cy="10" r="4.300" fill="#777" /><circle cx="10" cy="10" r="2" fill="#222" /><path d="M10 2v16" stroke="#666" /></Svg> },
  { w: "w-[9px]", n: <Caret c="#999" /> },
  { w: "w-[31px]", n: <Svg w={21}><g transform="scale(.88)"><SmallBall /></g><path d="m8.500 19 1-3.500 7-7.500 2.500 2-7 8z" fill="#f3d887" stroke="#555" strokeWidth=".9" /></Svg> },
  { w: "w-[22px]", n: <Svg w={21}><path d="M1 12h18v7.500H1z" fill="#444" /><path d="M1 14h4v3H1zm7 2.500h4v3H8zm7-2.500h4v3h-4z" fill="#e8e8e8" /><g transform="translate(1.500 -.5) scale(.82)"><SmallBall /></g></Svg> },
  { w: "w-[14px]", n: <Caret c="#999" /> },
  { w: "w-[29px]", n: <Svg><path d="M1 2.500h18v11.500H1z" fill="#d6d6d6" stroke="#6b6b6b" strokeWidth="1.400" /><path d="M10 14v4m-4 .5h8" stroke="#6b6b6b" strokeWidth="2" /></Svg> },
  { w: "w-[9px]", n: <Caret c="#999" /> },
];

function Viewport() {
  return (
    <main className="relative w-[1036px] shrink-0 bg-white">
      <div className="absolute top-[5px] left-[350px] flex h-[20px]">
        {HUD.map((h, i) => <Cell key={i} c={h.w}>{h.n}</Cell>)}
      </div>
      <div className="absolute top-[312px] -left-px flex h-[39px] w-[9px] items-center justify-center border border-l-0 border-[#808080] bg-[#f7f7f7]">
        <div className="size-[6px] rounded-full border border-[#8a8a8a] bg-[#ddd]" />
      </div>
      <Spinner />
      <Triad />
    </main>
  );
}

/* ---------- task pane ---------- */

const CubeBody = () => (
  <>
    <path d="M1 3.500 6 1h7l3 2v9.500L7 15l-6-3z" fill="#a80f14" stroke="#5b0508" strokeWidth=".8" />
    <path d="M1 3.500 6 1h7l3 2-8.500 2z" fill="#e23438" />
    <path d="M1 3.500 7.500 5V15L1 12z" fill="#cf1f24" />
    <path d="M5.800 6.800Q3 5.500 2.900 7.500 3 8.800 4.300 9.200 5.800 10 5.500 11 4.800 12.300 2.800 11" stroke="#fff" strokeWidth="1.300" />
    <path d="m9 6.500 1 5 1.500-3.500 1.500 3 1.500-5" stroke="#fff" strokeWidth="1.200" />
  </>
);
const SwCube = ({ children, s = 1, x = 0, y = 0 }: { children?: ReactNode; s?: number; x?: number; y?: number }) => (
  <Svg w={20}>
    <g transform={`translate(${x} ${y}) scale(${s})`}><CubeBody /></g>
    {children}
  </Svg>
);
const RxIcon = () => (
  <SwCube>
    <path d="M9.500 9.500h10v10h-10z" fill="#fff" stroke="#222" />
    <path d="M11.500 17v-6h2q1.500.3 1.500 1.500T13.500 14h-2m1.500 0 4.500 4m0-4-4 4.500" stroke="#222" strokeWidth="1" />
  </SwCube>
);
const SECTIONS: { t: string; h: string; items: { t: string; i: ReactNode }[] }[] = [
  {
    t: "SOLIDWORKS Tools", h: "h-[215px]", items: [
      { t: "Property Tab Builder", i: <SwCube><path d="M11.500 10.500h8v8.500h-8z" fill="#f5f5f5" stroke="#555" /><path d="M13 13h5m-5 2h5m-5 2h5" stroke="#777" strokeWidth=".8" /></SwCube> },
      { t: "SOLIDWORKS Rx", i: <RxIcon /> },
      { t: "Performance Benchmark Test", i: <RxIcon /> },
      { t: "Compare My Score", i: <Svg w={20}><rect x="1.500" y="1.500" width="17" height="17" rx="2" fill="#4c8fb3" stroke="#1f526e" /><path d="M4.500 7.500Q8 4.500 12.500 5.800M15.500 13Q12 16 7.500 14.700" stroke="#e8f2f8" strokeWidth="1.500" /><path d="M3.500 10.500q3 .5 4.500-1 2-2 4.500 0 2 1.500 4 .2M3.500 12q2 .5 4-.3m5 .3q2 .5 4-.5" stroke="#fff" strokeWidth="1.200" /><circle cx="10" cy="10.500" r="1.800" fill="#fff" /></Svg> },
      { t: "Copy Settings Wizard", i: <SwCube s={0.66} x={9} y={8.500}><path d="m9 4 7 6" stroke="#222" strokeWidth="1.800" /><path d="m3 3 1 1m3-3v2m4-2-1 2m5-1-1 1M3 6l1-1M13 3l2-1" stroke="#222" strokeWidth="1.200" /><path d="M8 4v8" stroke="#222" /><circle cx="5" cy="12" r="3.600" fill="#3d84a8" stroke="#12354a" strokeDasharray="2 1" strokeWidth="1.600" /><circle cx="5" cy="12" r="1.200" fill="#fff" /></SwCube> },
      { t: "My Products", i: <SwCube s={0.72}><path d="M5.500 7.500h8v11h-8z" fill="#fff" stroke="#444" /><path d="m6.500 15 2 2 3-4" stroke="#3fa02e" strokeWidth="1.500" /><path d="M9.500 19.500q0-5 5-5t5 5z" fill="#bbb" stroke="#666" strokeWidth=".8" /><circle cx="14.500" cy="11.500" r="3" fill="#ccc" stroke="#666" strokeWidth=".8" /></SwCube> },
    ],
  },
  {
    t: "Online Resources", h: "h-[103px]", items: [
      { t: "3DEXPERIENCE Marketplace", i: <Svg w={20}><circle cx="10" cy="10" r="9.500" fill="#2b4a66" /><circle cx="10" cy="10" r="7.500" stroke="#9db9cf" strokeWidth="3" strokeDasharray="2.500 9.300" /><circle cx="10" cy="10" r="4.500" fill="#4f7593" stroke="#0f2233" /><path d="m8.500 7.500 4 2.500-4 2.500z" stroke="#16324a" /></Svg> },
      { t: "Partner Solutions", i: <Svg w={20}><path d="m1 3 4 1.500 5-1 4 1L19 3v6l-3.500 1.500-5.500 4.500-6-4.500L1 9z" fill="#ececec" stroke="#333" strokeWidth="1.100" /><path d="M14 4.500 19 3v6l-3.500 1.500z" fill="#a9a9a9" stroke="#333" /><path d="m10 4-3 3.500 2 1 3-1.500 4 3.500M7 12l2-2m0 3.500 2-2" stroke="#444" strokeWidth=".9" /></Svg> },
    ],
  },
  {
    t: "Subscription Services", h: "h-[200px]", items: [
      { t: "Subscription Services", i: <Svg w={20}><circle cx="8" cy="8" r="7.500" fill="#e9f2f6" stroke="#222" /><path d="M2 5q3-4 7-4l-1 4-3 1v3zM11 3l4 4-2 1-3-1zM6 10l3 2-1 3-3-2z" fill="#4590b3" /><g transform="translate(8 8) scale(.72)"><CubeBody /></g></Svg> },
    ],
  },
];

function TaskPane() {
  return (
    <aside className="flex w-[307px] shrink-0 flex-col">
      <div className="flex h-[22px] shrink-0 items-center border-b border-black bg-[#acadb2] pl-[9px]">
        <Svg w={12} h={11} vb="0 0 12 11"><path d="m6 1-4 4.500L6 10m5-9L7 5.500 11 10" stroke="#222" strokeWidth="1.900" /></Svg>
        <div className="w-[246px] pl-[1px] text-center text-[12px] font-bold tracking-[-0.2px]">SOLIDWORKS Resources</div>
        <GearIcon w={17} c="#333" />
        <Svg w={14} className="ml-[4px]"><path d="m11 1 8 8-3 .5-3 3 .5 4-4-4L1 19l6.500-8.500-4-4 4.500.5 3-3z" fill="#222" /></Svg>
      </div>
      <div className="flex h-[73px] shrink-0 items-center pt-[4px] pl-[14px]">
        <div className="pb-[5px]"><HomeIcon /></div>
        <span className="pt-px pl-[4px] text-[11.500px] tracking-[-0.33px] text-[#4a4a4a]">Welcome to SOLIDWORKS</span>
      </div>
      {SECTIONS.map((s) => (
        <section key={s.t} className={`ml-[14px] w-[267px] shrink-0 border-t border-[#808080] ${s.h}`}>
          <div className="mb-[2px] flex h-[23px] items-center justify-between pr-[8px] pl-[3px] text-[11.500px] font-bold tracking-[-0.4px] text-[#3c3c3c]">
            {s.t}
            <Svg w={10} h={7} vb="0 0 10 7"><path d="m1 6 4-4 4 4" stroke="#666" strokeWidth="2.200" /></Svg>
          </div>
          {s.items.map((it) => (
            <div key={it.t} className="flex h-[28px] items-center pl-[2px] text-[11.500px] tracking-[-0.43px] text-[#4a4a4a]">
              <div className="pb-[7px]">{it.i}</div>
              <span className="pb-[3px] pl-[4px]">{it.t}</span>
            </div>
          ))}
        </section>
      ))}
    </aside>
  );
}

const SIDE: ReactNode[] = [
  <Svg w={20}><path d="m2 6 4-4 3-1M2 6v11l3 2V8zM6 8l4-6 3-1M6 8v11l3 .5V8zM10.500 8l4-5.500L18 4v12l-4 3.500h-3.500z" stroke="#333" fill="#eee" strokeWidth="1.200" /></Svg>,
  <Svg w={20}><path d="M1 18V3h5l2 2h8v3" fill="#ddd" stroke="#444" strokeWidth="1.200" /><path d="M1 18 6 7.500h13.500L14.500 18z" fill="#fafafa" stroke="#444" strokeWidth="1.200" /></Svg>,
  <Svg w={20}><path d="M1 2h18v16H1z" fill="#f0f0f0" stroke="#333" strokeWidth="1.300" /><path d="M4 4.500h6v3H4zm8.500 0h4v3h-4zM3.500 15.500h9v-2.500h-2.500v-3H6.500v3h-3z" fill="#f5c21d" stroke="#6e5200" /><path d="M14 11h5v7h-5z" fill="#bbb" stroke="#333" /></Svg>,
  <BallIcon w={17} />,
  <ListIcon w={19} />,
  <Svg w={20}><path d="M1 2.500h11.500v9H7l-3 3.500v-3.500H1z" fill="#4590b3" stroke="#1c4f68" /><path d="M8.500 7.500H19v8h-1.500V19l-3-3.500h-6z" fill="#f3f3f3" stroke="#444" strokeWidth="1.100" /></Svg>,
];

function SideTabs() {
  return (
    <div className="flex w-[27px] shrink-0 flex-col bg-white">
      <div className="ml-auto h-[28px] w-[4px] border-r border-[#808080] bg-[#f0f0f0]" />
      <div className="flex h-[23px] items-center justify-center border-t border-l border-[#808080] bg-[#f7f7f7] pr-[2px] pb-px"><HomeIcon w={19} /></div>
      {SIDE.map((s, i) => (
        <div key={i} className={`flex shrink-0 items-center justify-center border-t border-r border-l border-[#808080] bg-[#d4d4d4] pr-px ${i === 5 ? "h-[25px] border-b" : "h-[24px]"}`}>{s}</div>
      ))}
      <div className="ml-auto w-[4px] flex-1 border-r border-[#808080] bg-[#f0f0f0]" />
    </div>
  );
}

function WindowControls() {
  return (
    <div className="ml-auto flex h-[30px] items-center">
      <Cell c="w-[26px]"><Svg w={12} h={14} vb="0 0 12 14"><path d="M.7.700h10.600v12.600H.7zM3 1v12" stroke="#a3a3a3" strokeWidth="1.200" /><path d="M6.500 4v6L3 7z" fill="#a3a3a3" /></Svg></Cell>
      <Cell c="w-[26px]"><Svg w={12} h={14} vb="0 0 12 14"><path d="M.7.700h10.600v12.600H.7zM9 1v12" stroke="#a3a3a3" strokeWidth="1.200" /><path d="M6 4v6l3.500-3z" fill="#a3a3a3" /></Svg></Cell>
      <Cell c="w-[26px]"><MinGlyph c="#a3a3a3" /></Cell>
      <Cell c="w-[25px]"><RestoreGlyph c="#a3a3a3" /></Cell>
      <Cell c="w-[27px]"><CloseGlyph c="#a3a3a3" /></Cell>
    </div>
  );
}

/* ---------- bottom bars ---------- */

function BottomTabs() {
  const nav = ["M2 1v8M8 1 4 5l4 4z", "M7 1 3 5l4 4z", "M3 1l4 4-4 4z", "M2 1l4 4-4 4zM8 1v8"];
  return (
    <div className="flex h-[15px] shrink-0 border-r border-[#808080]">
      <div className="mr-[3px] flex flex-1 border-t border-r border-t-[#808080] border-r-[#8fb0b5] text-[12px] leading-[12px] tracking-[-0.25px]">
        <div className="flex w-[67px] border-t border-r border-[#333] bg-[#b4b4b4] pl-[2px]">
          {nav.map((d) => <Cell key={d} c="w-[16px] border-r border-[#909090]"><Svg w={11} vb="0 0 10 10"><path d={d} fill="#999" stroke="#8a8a8a" /></Svg></Cell>)}
        </div>
        <div className="w-[57px] border-r border-[#808080] pl-[3px] text-center font-bold tracking-[-0.4px]">Model</div>
        <div className="w-[68px] border-r border-[#808080] bg-[#d4d4d4] text-center text-[#222]">3D Views</div>
        <div className="w-[108px] border-r border-[#808080] bg-[#d4d4d4] pl-[9px] text-[#222]">Motion Study 1</div>
      </div>
    </div>
  );
}

function StatusBar() {
  return (
    <div className="flex h-[19px] shrink-0 items-center border-t border-[#808080] text-[12px] tracking-[-0.35px]">
      <span className="w-[1191px] pt-[2px] pl-px tracking-[-0.5px]">SOLIDWORKS Premium 2020 SP0.0</span>
      <span className="w-[94px] pt-[2px]">Under Defined</span>
      <span className="w-[219px] pt-[2px]">Editing Assembly</span>
      <span className="w-[45px] pt-[2px]">IPS</span>
      <Svg w={5} h={4} vb="0 0 5 4"><path d="M0 4h5L2.500.500z" fill="#333" /></Svg>
      <Svg w={17} h={15} className="ml-[26px]"><path d="M2 9.500Q0 4 5 2l12 3q3 2 2 6l-5 6.500L2 13z" fill="#e0e0e0" stroke="#333" strokeWidth="1.300" /><path d="m2 9 12 4 5-5m-5 5v4.500" stroke="#333" /><ellipse cx="7.500" cy="6" rx="2.500" ry="1.800" fill="#fff" stroke="#333" /><path d="m11 9 5-1.500M12 5.500l2 1" stroke="#333" /></Svg>
    </div>
  );
}

function TaskItem({ c, on, active, children }: { c: string; on?: string; active?: boolean; children: ReactNode }) {
  return (
    <div className={`flex h-[40px] shrink-0 flex-col items-center ${c} ${active ? "bg-[#4a4a4a]" : ""}`}>
      <div className="flex h-[38px] items-center">{children}</div>
      {on && <div className={`h-[2px] bg-[#76b9ed] ${on}`} />}
    </div>
  );
}

function Taskbar() {
  return (
    <footer className="flex h-[40px] shrink-0 bg-[#1f1f1f] text-white">
      <Cell c="w-[48px]"><Svg w={17}><path d="m0 3 8.500-1.300v7.800H0zM9.500 1.500 20 0v9.500H9.500zM0 10.500h8.500v7.800L0 17zM9.500 10.500H20V20L9.500 18.500z" fill="#fff" /></Svg></Cell>
      <div className="flex h-[40px] w-[344px] shrink-0 items-center border border-[#c5c5c5] bg-[#f2f2f2] pl-[10px]">
        <Svg w={17} h={17}><circle cx="12.500" cy="7" r="6" stroke="#222" strokeWidth="1.500" /><path d="M8.500 11.500 1 19" stroke="#222" strokeWidth="1.500" /></Svg>
        <span className="pl-[12px] text-[15px] tracking-[-0.7px] text-[#444]">Type here to search</span>
      </div>
      <TaskItem c="w-[48px]"><Svg w={17}><path d="M1 6h12v9H1zM1 1v2h12V1M1 20v-2h12v2M17 1v5m0 5v9" stroke="#fff" strokeWidth="1.400" /><path d="M15.500 7h3.500v3h-3.500z" fill="#fff" /></Svg></TaskItem>
      <TaskItem c="w-[51px]">
        <Svg w={23} h={24} vb="0 0 23 24">
          <path d="M2 2h17v21H2z" fill="#f1f5ea" /><path d="M2 9h17v14H2z" fill="#c5e59b" /><path d="M2 14h17v9H2z" fill="#7cc534" /><path d="M2 19h17v4H2z" fill="#3b8f12" />
          <path d="M4 1v3m3-3v3m3-3v3m3-3v3m3-3v3" stroke="#8a8a8a" strokeWidth="1.300" /><path d="M5.500 7.500v6m1.500-3h3m1 0h3" stroke="#223" strokeWidth="1.500" /><path d="m20 2 2 1-7 13-2 1 .3-2.500z" fill="#f2b33c" stroke="#8a5a10" strokeWidth=".6" />
        </Svg>
      </TaskItem>
      <TaskItem c="w-[49px]" on="w-[40px]">
        <Svg w={22} h={20} vb="0 0 22 20"><path d="M0 1h8l2 2.500h12V18H0z" fill="#f0b93a" /><path d="M0 5h22v13H0z" fill="#fcdc7c" /><path d="M4 19v-7q0-1.500 1.500-1.500h11q1.500 0 1.500 1.500v7h-4v-4H8v4z" fill="#3f9be0" /></Svg>
      </TaskItem>
      <TaskItem c="w-[49px]" on="w-[40px]">
        <Svg w={22} h={22} vb="0 0 22 22"><path d="M1 9.500C2.500 3 6.500.800 11.500.800c6 0 9.500 4.200 9.500 10v2.200H8c.3 3.500 3 4.700 6 4.700 2.300 0 4.300-.6 6-1.700v4.200c-2 1-4.200 1.500-7 1.500C6.500 21.700 3 18 3 13c0-4 2-6.500 5-8C5 5.300 2.500 7 1 9.500zM8 9.500h7.200c0-2.500-1.200-4-3.500-4S8.200 7.200 8 9.500z" fill="#1683e0" /></Svg>
      </TaskItem>
      <TaskItem c="w-[48px]">
        <Svg w={24} h={24} vb="0 0 24 24"><path d="M7.500 7V4.500Q7.500 1 12 1t4.500 3.500V7" stroke="#ddd" strokeWidth="1.300" /><path d="M1 6.500h22v15.500H1z" fill="#fff" /><path d="M7.500 9.500h4v4h-4z" fill="#f25022" /><path d="M12.500 9.500h4v4h-4z" fill="#7fba00" /><path d="M7.500 14.500h4v4h-4z" fill="#00a4ef" /><path d="M12.500 14.500h4v4h-4z" fill="#ffb900" /></Svg>
      </TaskItem>
      <TaskItem c="w-[49px]">
        <div className="flex flex-col items-center pr-[2px] font-bold">
          <span className="text-[9px] leading-[9px] tracking-[1px]">MS</span>
          <span className="text-[13px] leading-[11px] tracking-[-2.500px]"><span className="text-[#d01818]">D</span><span className="text-[#c026c8]">O</span><span className="text-[#e0c020]">S</span></span>
        </div>
      </TaskItem>
      <TaskItem c="w-[49px]"><Svg w={24} h={22} vb="0 0 24 22"><path d="M0 7 12 0l12 7v14H0z" fill="#fff" /><path d="M3 7.500h18L12 14.500z" fill="#1f1f1f" /><path d="m12 11 4 6-5-3z" fill="#1f1f1f" /></Svg></TaskItem>
      <TaskItem c="w-[51px]" on="w-[40px]">
        <Svg w={24} h={24} vb="0 0 24 24" className="-ml-px">
          <path d="M1 1h18l4 3v17l-4 2H1z" fill="#e8682c" /><path d="M2.500 2.500h14v19h-14z" fill="#f08a50" />
          <path d="M17 6h5v14h-5z" fill="#fbe3d3" />
          <path d="M6 18V5h3.500Q13.500 5 13.500 8.700T9.500 12.500H6" stroke="#fff" strokeWidth="2.600" />
          <circle cx="15.500" cy="16.500" r="3.700" fill="#fbe3d3" stroke="#d9561f" strokeWidth=".9" /><path d="M15.500 16.500v-3.700a3.700 3.700 0 0 1 3.700 3.700z" fill="#d9561f" />
        </Svg>
      </TaskItem>
      <TaskItem c="w-[48px]" on="w-[48px]" active>
        <Svg w={26} h={27} vb="0 0 26 27">
          <path d="M2 5 9 1h12l3 3v16l-11 4-11-4z" fill="#a80f14" /><path d="M2 5 9 1h12l3 3-11 3z" fill="#e23438" /><path d="M2 5l11 2v17L2 20z" fill="#cf1f24" />
          <path d="M10.500 9.500Q5 7.500 4.500 10.500 4.500 12.500 7.500 13.300 10.800 14.500 10 16.500 8.500 18.500 4.500 16.500" stroke="#fff" strokeWidth="2" />
          <path d="m14.500 9 1.500 8 2.300-6 2 5.500L22.500 8" stroke="#fff" strokeWidth="1.800" />
          <text x="4.500" y="26" fontSize="8.500" fontWeight="bold" fill="#fff" stroke="#333" strokeWidth="2" paintOrder="stroke">2020</text>
        </Svg>
      </TaskItem>
      <div className="ml-auto flex h-full w-[313px] shrink-0 text-center text-[12px] leading-[18px] tracking-[-0.4px]">
        <Cell c="w-[32px]"><Svg w={13} h={8} vb="0 0 13 8"><path d="m1 7 5.500-5.500L12 7" stroke="#fff" strokeWidth="1.300" /></Svg></Cell>
        <Cell c="w-[32px]"><Svg w={16} h={9} vb="0 0 16 9"><path d="M.6.600h13v7.800H.6z" stroke="#fff" strokeWidth="1.200" /><path d="M2 2h3v5H2z" fill="#fff" /><path d="M15 3v3" stroke="#fff" strokeWidth="1.500" /></Svg></Cell>
        <Cell c="w-[32px]"><Svg w={12} h={17} vb="0 0 12 17"><rect width="12" height="17" rx="5.500" fill="#0a84ff" /><path d="m3 5.500 6 5.500-3 2.500V3.500L9 6l-6 5.500" stroke="#fff" strokeWidth="1.200" /></Svg></Cell>
        <Cell c="w-[32px]"><Svg w={18} h={15} vb="0 0 18 15"><path d="M1 5h3l4-3.500v12L4 10H1z" stroke="#fff" strokeWidth="1.200" /><path d="M10 5q1.500 2.500 0 5" stroke="#fff" strokeWidth="1.200" /><path d="M12.500 3.500q2.500 4 0 8M15 2q3.500 5.500 0 11" stroke="#888" strokeWidth="1.200" /></Svg></Cell>
        <Cell c="w-[34px]"><Svg w={14} h={14} vb="0 0 14 14"><path d="M1 13Q1 2 13 2M4 13q0-7.500 9-7.500M7 13q0-4.500 6-4.500" stroke="#ddd" strokeWidth="1.200" /><circle cx="11.500" cy="12" r="1.800" fill="#fff" /></Svg></Cell>
        <Cell c="w-[31px]"><div><div>ENG</div><div>SK</div></div></Cell>
        <Cell c="w-[69px]"><div><div>6:42 PM</div><div>1/17/2020</div></div></Cell>
        <div className="flex w-[46px] items-center justify-center border-r border-[#666] pr-[3px]">
          <Svg w={25} h={25} vb="0 0 25 25" className="mt-[5px]">
            <path d="M1 1h16v12H9l-3 3v-3H1z" fill="#fff" /><path d="M4 4.500h10M4 7h10M4 9.500h7" stroke="#222" strokeWidth="1.100" />
            <circle cx="16.500" cy="16.500" r="7.700" fill="#333" stroke="#999" />
            <text x="13.500" y="20.500" fontSize="11" fontWeight="bold" fill="#fff">3</text>
          </Svg>
        </div>
      </div>
    </footer>
  );
}

export default function App() {
  return (
    <div className="flex h-[900px] w-[1600px] flex-col overflow-hidden bg-[#f7f7f7] font-['Noto_Sans','Open_Sans',sans-serif] text-black">
      <TitleBar />
      <Ribbon />
      <div className="flex h-[723px] shrink-0">
        <div className="flex w-[1293px] shrink-0 flex-col">
          <div className="flex h-[22px] shrink-0 bg-white">
            <CommandTabs />
            <WindowControls />
            <div className="ml-[5px] w-[4px] border-r border-[#808080] bg-[#f0f0f0]" />
          </div>
          <div className="flex h-[686px] shrink-0">
            <FeaturePanel />
            <Viewport />
            <SideTabs />
          </div>
          <BottomTabs />
        </div>
        <TaskPane />
      </div>
      <StatusBar />
      <Taskbar />
    </div>
  );
}
